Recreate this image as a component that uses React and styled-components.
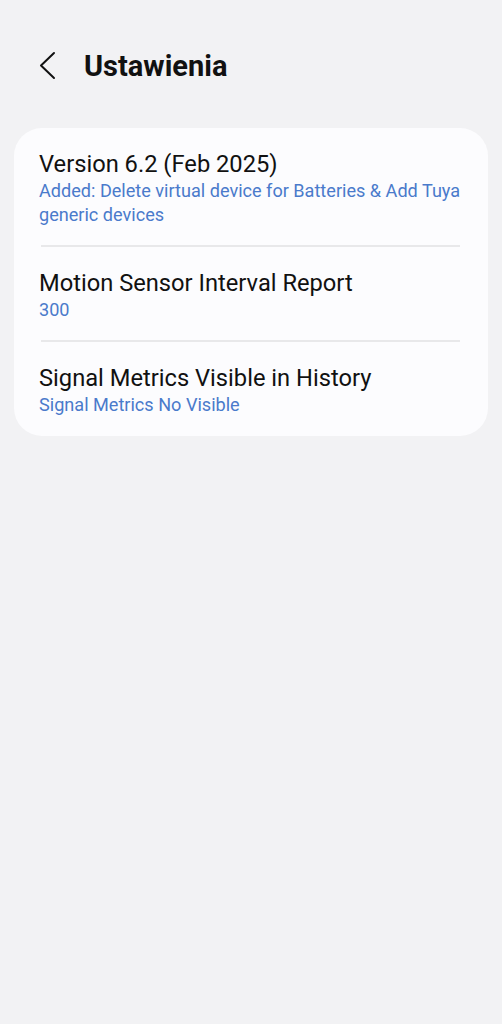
import React from "react";
import styled, { createGlobalStyle } from "styled-components";

const Global = createGlobalStyle`
  html, body { margin: 0; padding: 0; background: #f2f2f4; }
  body { font-family: Roboto, "Noto Sans", "Liberation Sans", sans-serif; }
  * { box-sizing: border-box; }
`;

const Page = styled.div`
  width: 502px;
  min-height: 1024px;
  background: #f2f2f4;
  display: flex;
  flex-direction: column;
  padding: 0 14px;
`;

const Header = styled.header`
  height: 128px;
  display: flex;
  align-items: flex-start;
  padding-top: 44px;
`;

const BackButton = styled.button`
  width: 70px;
  height: 44px;
  border: 0;
  background: none;
  padding: 0 0 0 24px;
  display: flex;
  align-items: center;
  cursor: pointer;
`;

const Title = styled.h1`
  margin: 0;
  font-size: 29px;
  font-weight: 700;
  color: #111;
  line-height: 44px;
`;

const Card = styled.section`
  background: #fcfcfe;
  border-radius: 28px;
  display: flex;
  flex-direction: column;
  padding: 0 27px 0 25px;
`;

const Row = styled.div`
  padding: 22px 0 ${(p) => (p.$last ? 19 : 18)}px;
`;

const Divider = styled.div`
  height: 2px;
  background: #e8e8ea;
  margin: 0 1px 0 2px;
`;

const RowTitle = styled.div`
  font-size: 23.7px;
  line-height: 29px;
  color: #111;
`;

const RowSub = styled.div`
  font-size: 18.1px;
  line-height: 24px;
  color: #4a7acb;
`;

const items = [
  {
    title: "Version 6.2 (Feb 2025)",
    sub: "Added: Delete virtual device for Batteries & Add Tuya generic devices",
  },
  { title: "Motion Sensor Interval Report", sub: "300" },
  { title: "Signal Metrics Visible in History", sub: "Signal Metrics No Visible" },
];

export default function App() {
  return (
    <Page>
      <Global />
      <Header>
        <BackButton aria-label="Back">
          <svg width="20" height="30" viewBox="0 0 20 30">
            <path d="M16 2 L3 14.5 L16 27" fill="none" stroke="#111" strokeWidth="2" strokeLinecap="round" strokeLinejoin="round" />
          </svg>
        </BackButton>
        <Title>Ustawienia</Title>
      </Header>
      <Card>
        {items.map((it, i) => (
          <React.Fragment key={i}>
            {i > 0 && <Divider />}
            <Row $last={i === items.length - 1}>
              <RowTitle>{it.title}</RowTitle>
              <RowSub>{it.sub}</RowSub>
            </Row>
          </React.Fragment>
        ))}
      </Card>
    </Page>
  );
}
